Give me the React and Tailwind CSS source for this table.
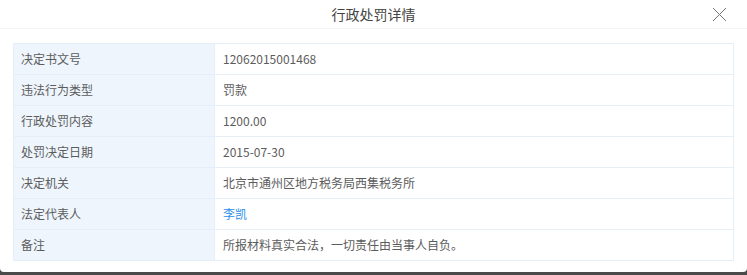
const rows = [
  { label: "决定书文号", value: "12062015001468" },
  { label: "违法行为类型", value: "罚款" },
  { label: "行政处罚内容", value: "1200.00" },
  { label: "处罚决定日期", value: "2015-07-30" },
  { label: "决定机关", value: "北京市通州区地方税务局西集税务所" },
  { label: "法定代表人", value: "李凯", link: true },
  { label: "备注", value: "所报材料真实合法，一切责任由当事人自负。" },
];

export default function App() {
  return (
    <div
      className="w-[747px] h-[275px] bg-[#4a4a4a] overflow-hidden"
      style={{ fontFamily: '"Noto Sans CJK SC", "Liberation Sans", sans-serif' }}
    >
      <div className="bg-white h-[272px] rounded-b-[4px]">
        {/* header */}
        <div className="relative h-[29px] border-b border-[#f2f4f7] flex items-center justify-center">
          <span className="text-[14px] text-[#444]">行政处罚详情</span>
          <button className="absolute right-[20px] top-[7px] text-[#777]">
            <svg width="15" height="15" viewBox="0 0 15 15" fill="none" stroke="currentColor" strokeWidth="1">
              <path d="M1 1L14 14M14 1L1 14" />
            </svg>
          </button>
        </div>

        {/* detail table */}
        <div className="px-[13px] pt-[14px]">
          <table className="w-[721px] border-collapse text-[12px]">
            <tbody>
              {rows.map((r) => (
                <tr key={r.label} className="h-[31px]">
                  <td className="w-[201px] bg-[#eef5fd] border border-[#e6eef8] pl-[7px] text-[#5c5c5c]">
                    {r.label}
                  </td>
                  <td
                    className={
                      "border border-[#e6eef8] pl-[8px] " +
                      (r.link ? "text-[#2b8fe8]" : "text-[#5c5c5c]")
                    }
                  >
                    {r.value}
                  </td>
                </tr>
              ))}
            </tbody>
          </table>
        </div>
      </div>
    </div>
  );
}
